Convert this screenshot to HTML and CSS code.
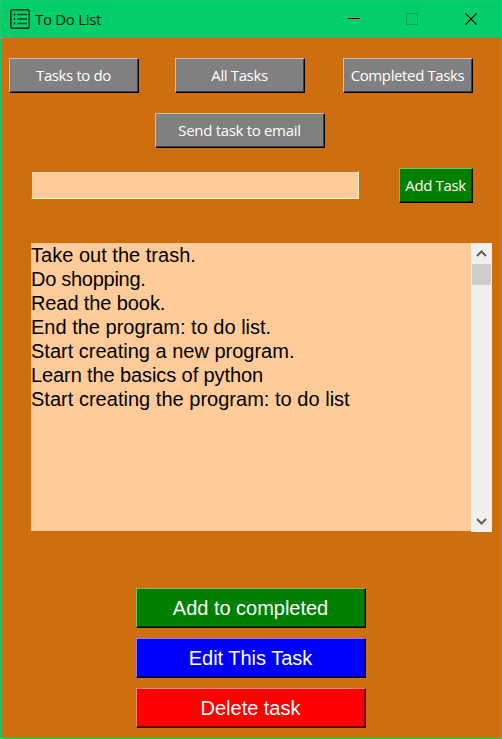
FILE: index.html
```html
<!DOCTYPE html>
<html lang="en">
<head>
<meta charset="utf-8">
<title>To Do List</title>
<link rel="stylesheet" href="styles.css">
</head>
<body>
<div class="window">
  <header class="titlebar">
    <svg class="app-icon" width="20" height="20" viewBox="0 0 20 20" fill="none" stroke="#032b18">
      <rect x=".8" y=".8" width="18.4" height="18.4" rx="2" stroke-width="1.5"/>
      <path d="M7 5.5h10M7 10h10M7 14.5h10" stroke-width="1.4" opacity=".8"/>
      <path d="M3.8 5.5h1.4M3.8 10h1.4M3.8 14.5h1.4" stroke-width="1.8"/>
    </svg>
    <h1 class="title">To Do List</h1>
    <div class="controls">
      <svg class="minimize" width="12" height="12" viewBox="0 0 12 12" shape-rendering="crispEdges"><path d="M0 5.5h12" stroke="#000"/></svg>
      <svg class="maximize" width="12" height="12" viewBox="0 0 12 12" fill="none"><rect x=".5" y=".5" width="11" height="11" stroke="#02a453"/></svg>
      <svg class="close" width="12" height="12" viewBox="0 0 12 12"><path d="M.3.3l11.4 11.4M11.7.3L.3 11.7" stroke="#000" stroke-width="1.1"/></svg>
    </div>
  </header>
  <main class="content">
    <nav class="filters">
      <button class="btn gray">Tasks to do</button>
      <button class="btn gray">All Tasks</button>
      <button class="btn gray completed">Completed Tasks</button>
    </nav>
    <button class="btn gray email">Send task to email</button>
    <div class="entry-row">
      <input class="entry" type="text" aria-label="New task">
      <button class="btn green add">Add Task</button>
    </div>
    <div class="list-row">
      <ul class="list">
        <li class="wide">Take out the trash.</li>
        <li class="tight">Do shopping.</li>
        <li class="snug">Read the book.</li>
        <li>End the program: to do list.</li>
        <li>Start creating a new program.</li>
        <li class="snug">Learn the basics of python</li>
        <li class="wide">Start creating the program: to do list</li>
      </ul>
      <div class="scrollbar">
        <svg class="arrow" width="19" height="21" viewBox="0 0 19 21" fill="none"><path d="M5 13l4.5-4.5L14 13" stroke="#606060" stroke-width="2"/></svg>
        <div class="thumb"></div>
        <svg class="arrow" width="19" height="21" viewBox="0 0 19 21" fill="none"><path d="M5 8l4.5 4.5L14 8" stroke="#606060" stroke-width="2"/></svg>
      </div>
    </div>
    <div class="actions">
      <button class="btn green large">Add to completed</button>
      <button class="btn blue large">Edit This Task</button>
      <button class="btn red large">Delete task</button>
    </div>
  </main>
</div>
</body>
</html>
```
FILE: styles.css
```css
* { box-sizing: border-box; }
body { margin: 0; overflow: hidden; }
.window {
  width: 502px;
  height: 739px;
  display: flex;
  flex-direction: column;
  border: 1px solid #16cb70;
  background: #cf6e0e;
}
.titlebar {
  height: 37px;
  flex: none;
  display: flex;
  align-items: center;
  padding: 0 24px 0 9px;
  background: #02cf69;
}
.app-icon { margin-top: -1px; }
.title {
  margin: -2px 0 0 5px;
  font: 15px/20px "Open Sans", "Noto Sans", sans-serif;
  letter-spacing: -0.3px;
  color: #001a0c;
}
.controls { display: flex; gap: 47px; margin-left: auto; }
.minimize { margin: 0 -1px 0 0; }
.maximize, .close { margin-bottom: 1px; }
.controls { margin-top: -1px; }
.content { padding: 20px 8px 0; display: flex; flex-direction: column; }
.btn {
  width: 130px;
  height: 35px;
  flex: none;
  padding: 0 1px 2px 0;
  border: 1px solid;
  border-radius: 0;
  border-color: var(--light) #000 #000 var(--light);
  box-shadow: inset -1px -1px var(--dark);
  background: var(--face);
  color: #fff;
  font: 15px/20px "Open Sans", "Noto Sans", sans-serif;
  letter-spacing: -0.38px;
  white-space: nowrap;
}
.gray { --face: #808080; --light: #c0c0c0; --dark: #404040; }
.green { --face: #008000; --light: #72bf72; --dark: #004000; }
.blue { --face: #0000ff; --light: #7f7fff; --dark: #000080; }
.red { --face: #ff0000; --light: #ff7f7f; --dark: #800000; }
.filters { display: flex; gap: 36px; }
.completed { margin-left: 2px; }
.email { width: 170px; margin: 20px 0 0 146px; letter-spacing: -0.32px; }
.entry-row { display: flex; align-items: flex-start; margin: 20px 0 0 22px; }
.entry {
  width: 328px;
  height: 28px;
  margin: 3px 0 0;
  padding: 0 2px;
  border: 1px solid;
  border-color: #a0794f #fff3c8 #fff3c8 #a0794f;
  border-radius: 0;
  background: #ffcc99;
  font: 16px "Liberation Sans", sans-serif;
}
.add { width: 74px; margin-left: 40px; }
.list-row { display: flex; align-items: flex-start; margin: 40px 0 0 22px; }
.list {
  width: 440px;
  height: 288px;
  margin: 0;
  padding: 0;
  list-style: none;
  background: #ffcc99;
  color: #000;
  font: 20px/24px "Liberation Sans", Arial, sans-serif;
}
.wide { letter-spacing: 0.02px; }
.snug { letter-spacing: -0.1px; }
.tight { letter-spacing: -0.28px; }
.scrollbar {
  width: 21px;
  height: 289px;
  display: flex;
  flex-direction: column;
  border: solid #fbf5ea;
  border-width: 0 1px;
  background: #f0f0f0;
}
.thumb { height: 21px; margin-bottom: auto; background: #cdcdcd; }
.actions { display: flex; flex-direction: column; gap: 10px; margin: 56px 0 0 127px; }
.large {
  width: 230px;
  height: 40px;
  padding: 0 1px 0 0;
  font: 20px/24px "Liberation Sans", Arial, sans-serif;
  letter-spacing: -0.02px;
}
```
